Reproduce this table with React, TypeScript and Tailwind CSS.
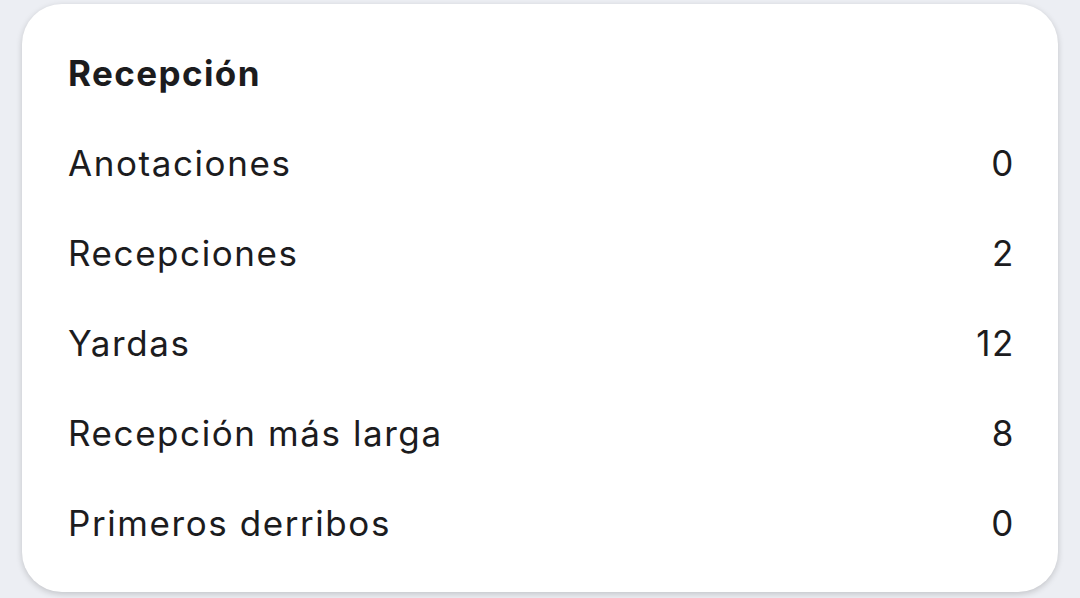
import React from 'react';

const rows: { label: string; value: string }[] = [
  { label: 'Anotaciones', value: '0' },
  { label: 'Recepciones', value: '2' },
  { label: 'Yardas', value: '12' },
  { label: 'Recepción más larga', value: '8' },
  { label: 'Primeros derribos', value: '0' },
];

export default function App() {
  return (
    <div className="w-[1080px] h-[598px] bg-[#eceef3] pt-[4px] pl-[22px] font-['Inter',sans-serif] text-[#1c1c1e]">
      <div className="w-[1036px] h-[588px] bg-white rounded-[40px] shadow-[0_2px_6px_rgba(0,0,0,0.18)] px-[46px] pt-[44px]">
        <h2 className="text-[35px] leading-[50px] font-bold tracking-[0.04em]">Recepción</h2>
        <div className="mt-[20px] flex flex-col">
          {rows.map((r) => (
            <div key={r.label} className="flex justify-between items-center h-[90px] text-[35px] tracking-[0.045em]">
              <span>{r.label}</span>
              <span className="-mr-[3px]">{r.value}</span>
            </div>
          ))}
        </div>
      </div>
    </div>
  );
}
